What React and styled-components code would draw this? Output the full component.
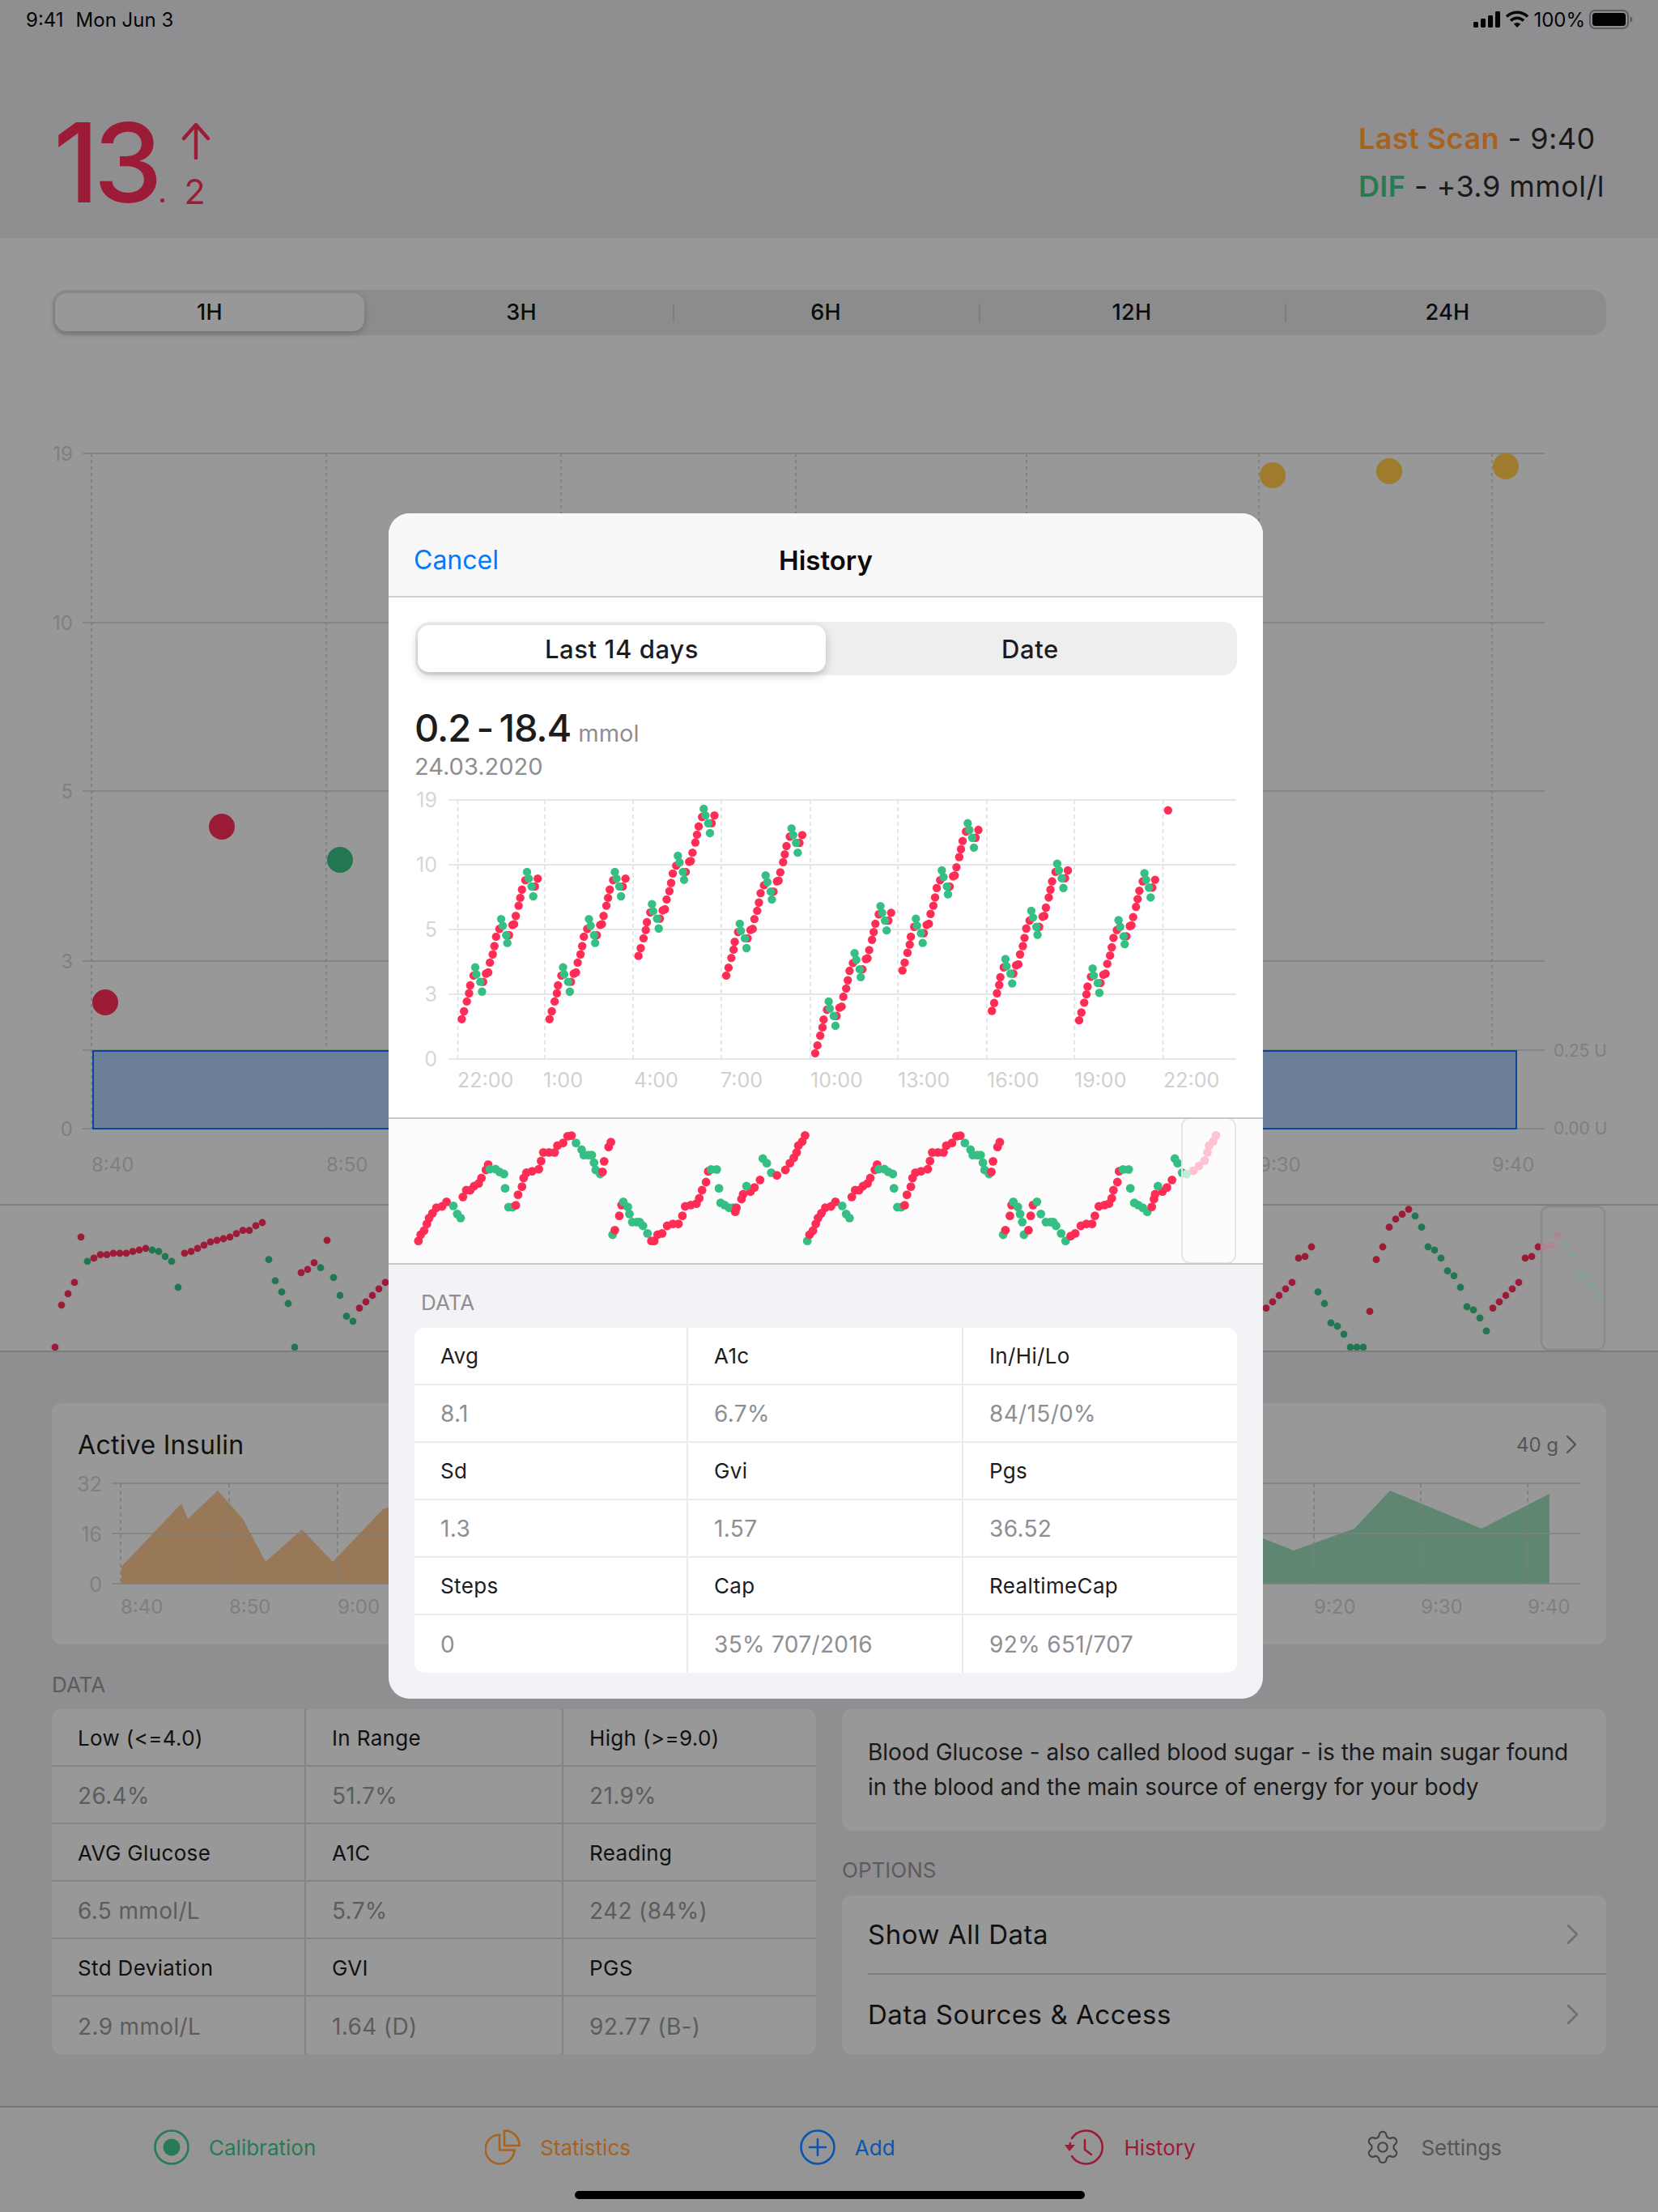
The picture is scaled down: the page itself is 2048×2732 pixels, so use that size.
import React from "react";
import styled, { createGlobalStyle } from "styled-components";
import { Settings as SettingsIcon } from "lucide-react";

const Global = createGlobalStyle`
  html, body { margin: 0; padding: 0; background: #8f8f91; }
  * { box-sizing: border-box; }
  body { font-family: Inter, "Liberation Sans", sans-serif; }
`;

const RED_D = "#9c1b36", GREEN_D = "#227650", ORANGE_D = "#a5631f", BLUE_D = "#0a55b0";
const RED = "#ff2d55", GREEN = "#36bf84";

const Page = styled.div`
  position: relative; width: 2048px; height: 2732px; overflow: hidden;
  display: flex; flex-direction: column; background: #8f8f91; color: #111;
`;
const Header = styled.header`height: 294px; background: #8f8f91; flex: none;`;
const StatusBar = styled.div`
  height: 48px; padding: 0 31px 0 32px; display: flex; justify-content: space-between; align-items: center;
  font-size: 24px; color: #050505;
`;
const StatusRight = styled.div`display: flex; align-items: center; gap: 5px;`;
const DateText = styled.span`margin-left: 15px;`;
const HeaderRow = styled.div`display: flex; justify-content: space-between; padding: 103px 66px 0 66px;`;
const Reading = styled.div`display: flex; align-items: flex-start; color: ${RED_D};`;
const Big = styled.div`font-size: 136px; line-height: 99px; font-weight: 550; letter-spacing: -7px; height: 99px;`;
const Frac = styled.div`display: flex; flex-direction: column; align-items: flex-end; width: 66px; height: 99px; justify-content: space-between;`;
const FracText = styled.div`font-size: 43px; line-height: 32px; font-weight: 400; display:flex; gap: 24px; align-items: flex-end; margin-right: 6px; margin-bottom: -2px;`;
const FracDot = styled.span`width: 5px; height: 5px; border-radius: 50%; background: ${RED_D}; margin-bottom: 2px;`;
const ScanInfo = styled.div`font-size: 36px; line-height: 59px; color: #1a1a1a; margin-top: -9px; letter-spacing: .45px;`;
const ScanLine = styled.div`white-space: nowrap;`;
const Accent = styled.span`color: ${p => p.$c}; font-weight: 600;`;

const Main = styled.section`background: #989898; flex: none; height: 1193px; padding-top: 64px;`;
const SegTrack = styled.div`
  display: grid; grid-template-columns: ${p => p.$cols};
  padding: ${p => p.$pad}; background: ${p => p.$bg}; border-radius: 18px;
  margin: ${p => p.$margin || 0};
`;
const Seg = styled.div`
  position: relative; height: ${p => p.$h}px; display: flex; align-items: center; justify-content: center;
  font-size: ${p => p.$fs}px; font-weight: 500; color: ${p => p.$color || "#0b0b0b"};
  letter-spacing: ${p => p.$ls || 0}px;
  padding-left: ${p => p.$shift || 0}px;
  border-radius: 14px;
  background: ${p => p.$active || "transparent"};
  box-shadow: ${p => (p.$active ? p.$shadow : "none")};
  &::before {
    content: ""; display: ${p => (p.$sep ? "block" : "none")};
    position: absolute; left: 0; top: 13px; bottom: 11px; width: 2px; background: #7d7d7d;
  }
`;
const Chart = styled.svg`display: block; flex: none;`;
const Strip = styled.section`
  flex: none; height: 183px; background: #989898; border-top: 2px solid #7c7c7c; border-bottom: 2px solid #7c7c7c;
`;
const Lower = styled.div`padding: 63px 64px 0; flex: none;`;
const Card = styled.div`background: #989898; border-radius: 12px;`;
const InsulinCard = styled(Card)`height: 298px; padding-top: 33px;`;
const TitleRow = styled.div`
  display: flex; justify-content: space-between; align-items: center; height: 36px;
  padding: 0 36px 0 32px;
`;
const CardTitle = styled.div`font-size: 32px; color: #111; letter-spacing: .3px;`;
const CardMore = styled.div`font-size: 24px; color: #555; display: flex; align-items: center; gap: 9px;`;
const Columns = styled.div`display: grid; grid-template-columns: 944px 944px; gap: 32px; margin-top: 34px;`;
const SectionLabel = styled.div`
  font-size: 26px; line-height: 32px; margin: ${p => p.$margin || "0"}; color: ${p => p.$color};
`;
const Table = styled.div`
  display: grid; grid-template-columns: ${p => p.$cols}; border-radius: 12px; overflow: hidden;
  background: ${p => p.$bg};
`;
const Cell = styled.div`
  height: 71px; display: flex; align-items: center; padding-left: 32px; padding-top: ${p => p.$nudge || 0}px;
  border-bottom: ${p => (p.$last ? "none" : `2px solid ${p.$line}`)};
  border-right: ${p => (p.$end ? "none" : `2px solid ${p.$line}`)};
  font-size: ${p => (p.$val ? 28 : 26)}px; letter-spacing: .35px;
  color: ${p => (p.$val ? p.$muted : p.$ink)};
  white-space: nowrap;
`;
const RightCol = styled.div`padding-top: 46px;`;
const Desc = styled(Card)`
  height: 150px; padding: 32px 32px; font-size: 28px; line-height: 43px; color: #1a1a1a;
`;
const OptionRow = styled.div`
  height: 98px; margin-left: 32px; padding-right: 34px; display: flex; align-items: center; justify-content: space-between;
  font-size: 33px; color: #111; letter-spacing: .55px;
  border-bottom: ${p => (p.$last ? "none" : "2px solid #808080")};
`;
const TabBar = styled.nav`
  margin-top: auto; height: 131px; flex: none; background: #959595; border-top: 2px solid #737373;
  padding: 27px 193px 0 190px; display: flex; justify-content: space-between; align-items: flex-start; position: relative;
`;
const TabItem = styled.div`
  display: flex; align-items: center; gap: 24px; height: 44px; font-size: 26px; color: ${p => p.$c};
`;
const HomeBar = styled.div`
  position: absolute; left: 710px; top: 103px; width: 630px; height: 10px; border-radius: 5px; background: #000;
`;

const Modal = styled.div`
  position: absolute; left: 480px; top: 634px; width: 1080px; height: 1464px; border-radius: 26px;
  overflow: hidden; background: #f2f2f7; display: flex; flex-direction: column;
`;
const ModalHead = styled.div`
  height: 104px; flex: none; background: #f8f8f8; border-bottom: 2px solid #d0d0d2; position: relative;
  display: flex; align-items: center; justify-content: center; padding-top: 13px;
`;
const Cancel = styled.div`position: absolute; left: 31px; top: 38px; font-size: 32px; line-height: 40px; color: #007aff;`;
const ModalTitle = styled.div`font-size: 33px; font-weight: 600; color: #0b0b0b;`;
const ModalBody = styled.div`background: #fff; flex: none; height: 642px; display:flex; flex-direction:column;`;
const ModalTop = styled.div`padding: 30px 32px 0 33px;`;
const Range = styled.div`
  margin: 37px 0 0 -1px; height: 56px; display: flex; align-items: baseline; gap: 9px; line-height: 56px;
`;
const RangeVal = styled.span`font-size: 47px; font-weight: 500; color: #1c1c1e; letter-spacing: -1.1px; word-spacing: -4px;`;
const RangeUnit = styled.span`font-size: 29px; color: #8e8e93;`;
const RangeDate = styled.div`font-size: 29px; line-height: 36px; color: #8e8e93; margin: 2px 0 0 -1px;`;
const ModalStrip = styled.div`flex: none; height: 182px; background: #fcfcfc; border-top: 2px solid #c8c8ca; border-bottom: 2px solid #c8c8ca;`;
const ModalData = styled.div`padding: 31px 32px 32px;`;

/* ---------- data ---------- */
const stripRaw = "r204,515 r228,369 r252,330 r276,291 r300,134 g324,218 r348,207 r372,195 r396,195 r420,190 r444,190 r468,190 r492,184 r516,179 r540,173 g564,179 g588,184 g612,201 g636,218 g660,308 r684,190 r708,184 r732,173 r756,162 r780,151 r804,145 r828,140 r852,134 r876,122 r900,111 r924,111 r948,95 r972,84 g996,212 g1020,285 g1044,324 g1068,364 g1092,515 r1116,257 r1140,246 r1164,223 g1188,240 r1212,145 g1236,274 g1260,336 g1284,408 g1308,425 r1332,380 r1356,358 r1380,336 r1404,313 r1428,291";
const stripRight = "r42,380 r66,358 r90,336 r114,313 r138,291 r162,207 r186,201 r210,168 g234,324 g258,364 g282,431 g306,442 g330,470 g354,515 g378,515 g402,515 r426,391 r450,212 r474,168 r498,100 r522,72 r546,55 r570,38 g594,61 g618,100 g642,168 g666,179 g690,207 g714,251 g738,268 g762,308 g786,375 g810,386 g834,414 g858,459 r882,380 r906,358 r930,336 r954,313 r978,291 r1002,207 r1026,201 r1050,168 x1074,168 x1098,162 x1122,128 y1152,156 y1176,195 y1200,263 y1224,274 y1248,302 y1272,336";
const parse = s => s.split(" ").map(t => { const [x, y] = t.slice(1).split(","); return { k: t[0], x: +x, y: +y }; });

const leftDots = parse(stripRaw).map(d => ({ ...d, x: d.x / 3, y: 1480 + d.y / 2.8 }));
const rightDots = parse(stripRight).map(d => ({ ...d, x: 1550 + d.x / 3, y: 1480 + d.y / 2.8 }));
const stripColor = { r: RED_D, g: GREEN_D, x: "#ae8590", y: "#85a092" };

const group = "r130,1297 r134,1277 r139,1252 r143,1231 r145,1211 r151,1186 r168,1202 r173,1181 r177,1178 r180,1153 r185,1132 r188,1111 r191,1087 r197,1067 r214,1083 r220,1057 r223,1055 r226,1034 r231,1008 r234,988 r237,967 r243,943 r260,959 r265,939 g154,1165 g156,1183 g163,1202 g166,1227 g200,1042 g203,1059 g209,1083 g211,1103 g246,922 g249,939 g254,959 g257,984";
const groupOffsets = [[0, 0], [156, 0], [314, -161], [470, -111], [628, 87], [783, -124], [942, -21], [1097, 3]];
const histDots = [];
groupOffsets.forEach(([dx, dy]) => parse(group).forEach(d => histDots.push({ k: d.k, x: d.x + dx, y: d.y + dy })));
histDots.push({ k: "r", x: 1385, y: 765 });

const groupA = "r53,488 r57,465 r63,450 r68,425 r72,403 r78,385 r85,365 r95,360 r103,343 g115,358 g122,388 g128,403 r132,325 r138,300 r145,300 r152,285 r160,275 r165,255 r173,225 r177,205 g180,222 g190,222 g197,232 g205,240 g207,293 g213,363 g220,363 r226,356 r230,317 r237,287 r240,255 r245,235 r255,230 r267,222 r271,192 r275,160 r285,160 r295,160 r300,135 r310,125 r318,100 r325,98 g333,125 g343,150 g347,170 g355,170 g361,170 g365,198 g368,225 g376,240 r380,232 r383,193 r391,140 r395,122";
const groupB = "g398,465 r402,448 r410,395 r414,355 g417,343 g425,362 g428,388 g433,418 g441,418 g446,418 g452,432 g460,460 r467,488 r472,488 r478,465 r486,460 r495,432 r505,425 r515,425 r522,395 r527,360 r537,355 r547,350 r552,330 r557,300 r564,270 r568,230 g573,223 g583,223 g587,293 g590,347 g597,355 g605,365 g612,365 r618,365 r616,380 r627,333 r630,315 r643,305 r650,290 r660,262 g636,285 g665,183 g672,200 g680,235 r690,245 r705,225 r713,200 r720,180 r725,160 r728,135 r735,120 r740,97";
const groupD = "g1092,465 r1096,448 r1104,395 r1107,355 g1110,343 g1118,362 g1122,388 g1126,418 g1129,465 r1137,448 r1141,395 r1145,355 g1152,343 g1159,388 g1168,418 g1176,418 g1181,418 g1186,432 g1195,460 g1203,488 r1212,470 r1220,460 r1230,432 r1240,425 r1250,425 r1255,395 r1262,360 r1272,355 r1280,350 r1285,330 r1288,300 r1295,270 r1298,230 g1305,223 g1315,223 g1318,293 g1325,347 g1332,355 g1340,365 g1348,380 r1356,362 r1360,333 r1362,315 r1375,305 r1383,290 r1392,262 g1367,285 g1397,183 g1402,200 g1410,235 y1418,240 x1430,228 x1440,210 x1450,190 x1455,160 x1458,135 x1465,120 x1470,97";
const ministrip = [
  ...parse(groupA),
  ...parse(groupB),
  ...parse(groupA).map((d, i) => ({ ...d, k: i === 0 ? "g" : d.k, x: d.x + 691 })),
  ...parse(groupD),
];
const miniColor = { r: RED, g: GREEN, x: "#ffc2d0", y: "#c2ecd9" };
const mx = x => 480 + x / 1.4385;
const my = y => 630 + y / 2.063;

const axisFont = "Inter, 'Liberation Sans', sans-serif";

const MainChart = () => {
  const ys = [[560, "19"], [769, "10"], [977, "5"], [1187, "3"], [1394, "0"]];
  const xs = [[113, "8:40"], [403, "8:50"], [693, "9:00"], [983, "9:10"], [1268, "9:20"], [1555, "9:30"], [1843, "9:40"]];
  return (
    <Chart width="2048" height="1073" viewBox="0 414 2048 1073">
      {ys.map(([y, t]) => (
        <g key={t}>
          <line x1="102" x2="1908" y1={y} y2={y} stroke="#848484" strokeWidth="2" />
          <text x="90" y={y + 9} textAnchor="end" fontSize="24" fontFamily={axisFont} fill="#7f7f7f">{t}</text>
        </g>
      ))}
      <line x1="102" x2="1908" y1="1297" y2="1297" stroke="#848484" strokeWidth="2" />
      {xs.map(([x, t]) => (
        <g key={t}>
          <line x1={x} x2={x} y1="560" y2="1394" stroke="#818181" strokeWidth="2" strokeDasharray="4 4" />
          <text x={x} y="1447" fontSize="24" fontFamily={axisFont} fill="#7f7f7f">{t}</text>
        </g>
      ))}
      <rect x="115" y="1298" width="1758" height="96" fill="#607998" fillOpacity=".8" stroke="#07479b" strokeWidth="2" />
      <text x="1919" y="1305" fontSize="21" fontFamily={axisFont} fill="#7f7f7f">0.25 U</text>
      <text x="1919" y="1401" fontSize="21" fontFamily={axisFont} fill="#7f7f7f">0.00 U</text>
      <circle cx="130" cy="1238" r="16" fill={RED_D} />
      <circle cx="274" cy="1021" r="16" fill={RED_D} />
      <circle cx="420" cy="1062" r="16" fill={GREEN_D} />
      <circle cx="1572" cy="587" r="16" fill="#9f7c2d" />
      <circle cx="1716" cy="582" r="16" fill="#9f7c2d" />
      <circle cx="1860" cy="576" r="16" fill="#9f7c2d" />
    </Chart>
  );
};

const StripChart = () => (
  <Chart width="2048" height="179" viewBox="0 1489 2048 179">
    {[...leftDots, ...rightDots].filter(d => d.k === "r" || d.k === "g").map((d, i) => (
      <circle key={i} cx={d.x} cy={d.y} r="4.4" fill={stripColor[d.k]} />
    ))}
    <rect x="1904" y="1490" width="78" height="177" rx="10" fill="none" stroke="#8a8a8a" strokeWidth="2.4" />
    {rightDots.filter(d => d.k === "x" || d.k === "y").map((d, i) => (
      <circle key={i} cx={d.x} cy={d.y} r="4.4" fill={stripColor[d.k]} />
    ))}
  </Chart>
);

const insLabels = [[149, "8:40"], [283, "8:50"], [417, "9:00"], [1623, "9:20"], [1755, "9:30"], [1887, "9:40"]];
const InsulinChart = () => (
  <Chart width="1920" height="229" viewBox="64 1803 1920 229">
    <polygon fill="#997858" points="150,1957 150,1936 224,1858 232,1877 269,1842 300,1877 328,1930 373,1890 411,1930 473,1865 490,1860 490,1957" />
    <polygon fill="#5f8671" points="1540,1957 1540,1893 1598,1916 1673,1889 1717,1842 1830,1889 1914,1846 1914,1957" />
    {[[1833, "32"], [1895, "16"], [1957, "0"]].map(([y, t]) => (
      <g key={t}>
        <line x1="138" x2="1952" y1={y} y2={y} stroke="#7f7f7f" strokeOpacity=".75" strokeWidth="2" />
        <text x="126" y={y + 10} textAnchor="end" fontSize="25" fontFamily={axisFont} fill="#7f7f7f">{t}</text>
      </g>
    ))}
    {insLabels.map(([x, t]) => (
      <g key={t}>
        <line x1={x} x2={x} y1="1833" y2="1957" stroke="#7d7d7d" strokeOpacity=".8" strokeWidth="2" strokeDasharray="5 4" />
        <text x={x} y="1994" fontSize="24" fontFamily={axisFont} fill="#7f7f7f">{t}</text>
      </g>
    ))}
  </Chart>
);

const histLabels = [[565, "22:00"], [671, "1:00"], [783, "4:00"], [890, "7:00"], [1001, "10:00"], [1109, "13:00"], [1219, "16:00"], [1327, "19:00"], [1437, "22:00"]];
const histVert = [565.5, 673, 782, 891, 1001, 1109, 1219, 1327, 1436.6];
const HistoryChart = () => (
  <Chart width="1080" height="415" viewBox="480 965 1080 415">
    {[[988, "19"], [1068, "10"], [1148, "5"], [1228, "3"], [1308, "0"]].map(([y, t]) => (
      <g key={t}>
        <line x1="554" x2="1527" y1={y} y2={y} stroke="#e6e6e6" strokeWidth="2" />
        <text x="540" y={y + 9} textAnchor="end" fontSize="25" fontFamily={axisFont} fill="#d6d6d6">{t}</text>
      </g>
    ))}
    {histVert.map(x => (
      <line key={x} x1={x} x2={x} y1="988" y2="1308" stroke="#e0e0e0" strokeWidth="1.6" strokeDasharray="5 4" />
    ))}
    {histLabels.map(([x, t], i) => (
      <text key={i} x={x} y="1343" fontSize="25" fontFamily={axisFont} fill="#d0d0d0">{t}</text>
    ))}
    {histDots.map((d, i) => (
      <circle key={i} cx={mx(d.x)} cy={my(d.y)} r="5.2" fill={d.k === "r" ? RED : GREEN} />
    ))}
  </Chart>
);

const MiniChart = () => (
  <Chart width="1080" height="178" viewBox="480 1382 1080 178">
    {ministrip.map((d, i) => (
      <circle key={i} cx={mx(d.x)} cy={1370 + d.y / 3} r="5.4" fill={miniColor[d.k]} />
    ))}
    <rect x="1460" y="1381" width="66" height="179" rx="10" fill="none" stroke="#e6e6e6" strokeWidth="2" />
  </Chart>
);

/* ---------- icons ---------- */
const Signal = () => (
  <svg width="34" height="20" viewBox="0 0 34 20">
    <rect x="0" y="13" width="6" height="7" rx="1.4" fill="#050505" />
    <rect x="9" y="9" width="6" height="11" rx="1.4" fill="#050505" />
    <rect x="18" y="5" width="6" height="15" rx="1.4" fill="#050505" />
    <rect x="27" y="0" width="6" height="20" rx="1.4" fill="#050505" />
  </svg>
);
const Wifi = () => (
  <svg width="30" height="22" viewBox="0 0 30 22" fill="none" stroke="#050505" strokeWidth="3.4">
    <path d="M2 7.5a18.6 18.6 0 0 1 26 0" />
    <path d="M7 12.5a11.3 11.3 0 0 1 16 0" />
    <path d="M15 21l-4.2-4.4a6 6 0 0 1 8.4 0z" fill="#050505" stroke="none" />
  </svg>
);
const Battery = () => (
  <svg width="54" height="24" viewBox="0 0 54 24">
    <rect x="1" y="1" width="47" height="22" rx="6" fill="none" stroke="#5c5c5c" strokeWidth="2" />
    <rect x="4" y="4" width="41" height="16" rx="3.5" fill="#020202" />
    <path d="M50.5 8.5c2 .6 3 1.8 3 3.5s-1 2.9-3 3.5z" fill="#5c5c5c" />
  </svg>
);
const UpArrow = () => (
  <svg width="36" height="46" viewBox="0 0 36 46" fill="none" stroke={RED_D} strokeWidth="4.4" strokeLinecap="round" strokeLinejoin="round">
    <path d="M18 44V3M3 20 18 3l15 17" />
  </svg>
);
const Chevron = ({ w = 15, h = 26, c = "#707070", sw = 2.6 }) => (
  <svg width={w} height={h} viewBox="0 0 14 24" fill="none" stroke={c} strokeWidth={sw} strokeLinecap="round" strokeLinejoin="round">
    <path d="M2 2l10 10L2 22" />
  </svg>
);
const CalibrationIcon = () => (
  <svg width="44" height="44" viewBox="0 0 44 44" fill="none" stroke="#277b54" strokeWidth="2.6">
    <circle cx="22" cy="22" r="20.5" />
    <circle cx="22" cy="22" r="10.5" fill="#277b54" stroke="none" />
  </svg>
);
const StatsIcon = () => (
  <svg width="44" height="44" viewBox="0 0 44 44" fill="none" stroke={ORANGE_D} strokeWidth="2.6" strokeLinejoin="round">
    <path d="M18 6.5A18 18 0 1 0 36.5 25.5H18z" />
    <path d="M24 1.5A18 18 0 0 1 42.5 20H24z" />
  </svg>
);
const AddIcon = () => (
  <svg width="44" height="44" viewBox="0 0 44 44" fill="none" stroke={BLUE_D} strokeWidth="2.6" strokeLinecap="round">
    <circle cx="22" cy="22" r="20.5" />
    <path d="M22 12v20M12 22h20" />
  </svg>
);
const HistoryIcon = () => (
  <svg width="50" height="44" viewBox="0 0 50 44" fill="none" stroke={RED_D} strokeWidth="2.6" strokeLinecap="round" strokeLinejoin="round">
    <path d="M9 11A20.5 20.5 0 1 1 9 33" />
    <path d="M6 24C6 22 6.2 20 7 17" />
    <path d="M0 19l6 8 7-8z" fill={RED_D} stroke="none" />
    <path d="M25 13v12l8 6" />
  </svg>
);

const statsRows = [
  ["Low (<=4.0)", "In Range", "High (>=9.0)"],
  ["26.4%", "51.7%", "21.9%"],
  ["AVG Glucose", "A1C", "Reading"],
  ["6.5 mmol/L", "5.7%", "242 (84%)"],
  ["Std Deviation", "GVI", "PGS"],
  ["2.9 mmol/L", "1.64 (D)", "92.77 (B-)"],
];
const histRows = [
  ["Avg", "A1c", "In/Hi/Lo"],
  ["8.1", "6.7%", "84/15/0%"],
  ["Sd", "Gvi", "Pgs"],
  ["1.3", "1.57", "36.52"],
  ["Steps", "Cap", "RealtimeCap"],
  ["0", "35% 707/2016", "92% 651/707"],
];
const DataTable = ({ rows, cols, bg, line, ink, muted, nudge }) => (
  <Table $cols={cols} $bg={bg}>
    {rows.flatMap((row, r) => row.map((text, c) => (
      <Cell key={`${r}-${c}`} $val={r % 2 === 1} $last={r === rows.length - 1} $end={c === 2} $line={line} $ink={ink} $muted={muted} $nudge={nudge}>{text}</Cell>
    )))}
  </Table>
);

export default function App() {
  return (
    <Page>
      <Global />
      <Header>
        <StatusBar>
          <div>9:41<DateText>Mon Jun 3</DateText></div>
          <StatusRight><Signal /><Wifi /><span>100%</span><Battery /></StatusRight>
        </StatusBar>
        <HeaderRow>
          <Reading>
            <Big>13</Big>
            <Frac><UpArrow /><FracText><FracDot />2</FracText></Frac>
          </Reading>
          <ScanInfo>
            <ScanLine><Accent $c={ORANGE_D}>Last Scan</Accent> - 9:40</ScanLine>
            <ScanLine><Accent $c="#277b54">DIF</Accent> - +3.9 mmol/l</ScanLine>
          </ScanInfo>
        </HeaderRow>
      </Header>
      <Main>
        <SegTrack $cols="382px 381px 378px 378px 395px" $pad="4px 3px 5px" $bg="#8c8c8c" $margin="0 64px 0 65px">
          <Seg $h={47} $fs={27} $ls={.3} $active="#989898" $shadow="0 3px 8px rgba(0,0,0,.2)">1H</Seg>
          <Seg $h={47} $fs={27} $ls={.3} $shift={7}>3H</Seg>
          <Seg $h={47} $fs={27} $ls={.3} $sep>6H</Seg>
          <Seg $h={47} $fs={27} $ls={.3} $sep>12H</Seg>
          <Seg $h={47} $fs={27} $ls={.3} $shift={7} $sep>24H</Seg>
        </SegTrack>
        <MainChart />
      </Main>
      <Strip><StripChart /></Strip>
      <Lower>
        <InsulinCard>
          <TitleRow>
            <CardTitle>Active Insulin</CardTitle>
            <CardMore>40 g <Chevron w={14} h={24} c="#555" sw={2.4} /></CardMore>
          </TitleRow>
          <InsulinChart />
        </InsulinCard>
        <Columns>
          <div>
            <SectionLabel $color="#5c5c5c" $margin="0 0 14px">DATA</SectionLabel>
            <DataTable rows={statsRows} cols="314px 318px 312px" bg="#989898" line="#848484" ink="#111" muted="#5c5c5c" nudge={2} />
          </div>
          <RightCol>
            <Desc>Blood Glucose - also called blood sugar - is the main sugar found in the blood and the main source of energy for your body</Desc>
            <SectionLabel $color="#5c5c5c" $margin="33px 0 15px">OPTIONS</SectionLabel>
            <Card>
              <OptionRow>Show All Data<Chevron /></OptionRow>
              <OptionRow $last>Data Sources &amp; Access<Chevron /></OptionRow>
            </Card>
          </RightCol>
        </Columns>
      </Lower>
      <TabBar>
        <TabItem $c="#277b54"><CalibrationIcon />Calibration</TabItem>
        <TabItem $c={ORANGE_D}><StatsIcon />Statistics</TabItem>
        <TabItem $c={BLUE_D}><AddIcon />Add</TabItem>
        <TabItem $c={RED_D}><HistoryIcon />History</TabItem>
        <TabItem $c="#555"><SettingsIcon size={46} strokeWidth={1.15} color="#444" />Settings</TabItem>
        <HomeBar />
      </TabBar>
      <Modal>
        <ModalHead>
          <Cancel>Cancel</Cancel>
          <ModalTitle>History</ModalTitle>
        </ModalHead>
        <ModalBody>
          <ModalTop>
            <SegTrack $cols="504px 1fr" $pad="4px 3px" $bg="#eeeeee">
              <Seg $h={58} $fs={31} $ls={.6} $color="#1c1c1e" $active="#fff" $shadow="0 4px 12px rgba(0,0,0,.22)">Last 14 days</Seg>
              <Seg $h={58} $fs={31} $ls={.6} $color="#1c1c1e">Date</Seg>
            </SegTrack>
            <Range><RangeVal>0.2 - 18.4</RangeVal><RangeUnit>mmol</RangeUnit></Range>
            <RangeDate>24.03.2020</RangeDate>
          </ModalTop>
          <HistoryChart />
        </ModalBody>
        <ModalStrip><MiniChart /></ModalStrip>
        <ModalData>
          <SectionLabel $color="#8e8e93" $margin="0 0 15px 8px">DATA</SectionLabel>
          <DataTable rows={histRows} cols="338px 340px 338px" bg="#fff" line="#ebebeb" ink="#1c1c1e" muted="#8e8e93" />
        </ModalData>
      </Modal>
    </Page>
  );
}
